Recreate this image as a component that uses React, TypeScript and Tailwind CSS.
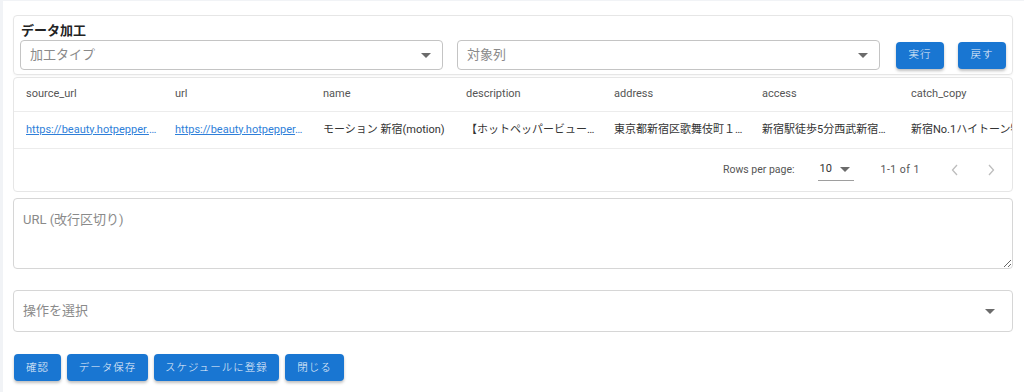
import React from 'react';

const widths = [149, 148, 143, 148, 148, 149, 160];
const columns = ['source_url', 'url', 'name', 'description', 'address', 'access', 'catch_copy'];

const row = [
  { text: 'https://beauty.hotpepper.jp/slnH000123456/', link: true },
  { text: 'https://beauty.hotpepper.jp/slnH000123456/', link: true },
  { text: 'モーション 新宿(motion)', link: false },
  { text: '【ホットペッパービューティー】モーション 新宿', link: false },
  { text: '東京都新宿区歌舞伎町１－１－１', link: false },
  { text: '新宿駅徒歩5分西武新宿駅徒歩3分', link: false },
  { text: '新宿No.1ハイトーン特化サロン', link: false },
];

const Caret = ({ className = '' }: { className?: string }) => (
  <svg className={className} width="10" height="5" viewBox="0 0 10 5">
    <path d="M0 0 L10 0 L5 5 Z" fill="#6b6b6b" />
  </svg>
);

const SelectBox = ({ label, className = '' }: { label: string; className?: string }) => (
  <div
    className={`flex items-center justify-between border border-[#c4c4c4] rounded-[4px] px-[9px] bg-white ${className}`}
  >
    <span className="text-[13px] text-[#8a8a8a]">{label}</span>
    <Caret className="mr-[2px]" />
  </div>
);

const BlueButton = ({ label, className = '' }: { label: string; className?: string }) => (
  <button
    className={`h-[27px] rounded-[4px] bg-[#1976d2] text-[#eef4fb] text-[10.5px] font-light tracking-[1px] shadow-[0_2px_3px_rgba(0,0,0,0.25)] ${className}`}
  >
    {label}
  </button>
);

export default function App() {
  return (
    <div
      className="w-[1024px] h-[392px] bg-white border-t border-l-[3px] border-[#f1f3f6] overflow-hidden"
      style={{ fontFamily: 'Roboto, "Noto Sans CJK JP", sans-serif' }}
    >
      <div className="pl-[10px] pr-[11px] pt-[14px]">
        {/* データ加工 */}
        <div className="border border-[#e6e6e6] rounded-[4px] px-[6px] pt-[6px] pb-[4px] shadow-[0_1px_2px_rgba(0,0,0,0.04)]">
          <div className="text-[13px] font-bold text-[#222] leading-[18px] ml-[1px]">データ加工</div>
          <div className="flex items-center gap-[14px]">
            <SelectBox label="加工タイプ" className="w-[423px] h-[30px]" />
            <SelectBox label="対象列" className="w-[423px] h-[30px]" />
            <BlueButton label="実行" className="w-[48px] ml-[2px]" />
            <BlueButton label="戻す" className="w-[48px]" />
          </div>
        </div>

        {/* table */}
        <div className="mt-[2px] border border-[#e6e6e6] rounded-[4px] overflow-hidden">
          <div className="flex h-[34px] items-center border-b border-[#ececec]">
            {columns.map((c, i) => (
              <div
                key={c}
                className="shrink-0 pl-[12px] text-[11px] text-[#555] whitespace-nowrap"
                style={{ width: widths[i] }}
              >
                {c}
              </div>
            ))}
          </div>
          <div className="flex h-[37px] items-center border-b border-[#ececec]">
            {row.map((cell, i) => (
              <div
                key={i}
                className={`shrink-0 pl-[12px] text-[11px] whitespace-nowrap overflow-hidden ${i === 6 ? '' : 'pr-[6px]'}`}
                style={{ width: widths[i] }}
              >
                {cell.link ? (
                  <span className="block truncate text-[#2f7fd9] underline">{cell.text}</span>
                ) : (
                  <span className={`block text-[#333] ${i === 6 ? 'overflow-hidden' : 'truncate'}`}>{cell.text}</span>
                )}
              </div>
            ))}
          </div>
          <div className="flex h-[42px] items-center justify-end text-[10.5px] text-[#555]">
            <span>Rows per page:</span>
            <div className="ml-[23px] w-[36px] h-[22px] flex items-center justify-between border-b border-[#9e9e9e] pl-[2px] pr-[4px]">
              <span className="text-[11px] text-[#333]">10</span>
              <Caret />
            </div>
            <span className="ml-[27px] tracking-[0.5px]">1-1 of 1</span>
            <svg className="ml-[31px]" width="8" height="12" viewBox="0 0 8 12">
              <path d="M6 1 L1.5 6 L6 11" stroke="#bdbdbd" strokeWidth="1.3" fill="none" />
            </svg>
            <svg className="ml-[28px] mr-[17px]" width="8" height="12" viewBox="0 0 8 12">
              <path d="M2 1 L6.5 6 L2 11" stroke="#bdbdbd" strokeWidth="1.3" fill="none" />
            </svg>
          </div>
        </div>

        {/* URL textarea */}
        <textarea
          className="mt-[6px] block w-full h-[71px] border border-[#d6d6d6] rounded-[4px] px-[9px] py-[11px] text-[13px] text-[#333] placeholder:text-[#8a8a8a] resize-y outline-none"
          placeholder="URL (改行区切り)"
        />

        {/* 操作を選択 */}
        <div className="mt-[21px] h-[42px] flex items-center justify-between border border-[#d6d6d6] rounded-[4px] px-[9px]">
          <span className="text-[13px] text-[#8a8a8a]">操作を選択</span>
          <Caret className="mr-[8px]" />
        </div>

        {/* actions */}
        <div className="mt-[22px] flex gap-[6px] ml-[1px]">
          <BlueButton label="確認" className="w-[47px]" />
          <BlueButton label="データ保存" className="w-[81px]" />
          <BlueButton label="スケジュールに登録" className="w-[125px]" />
          <BlueButton label="閉じる" className="w-[59px]" />
        </div>
      </div>
    </div>
  );
}
